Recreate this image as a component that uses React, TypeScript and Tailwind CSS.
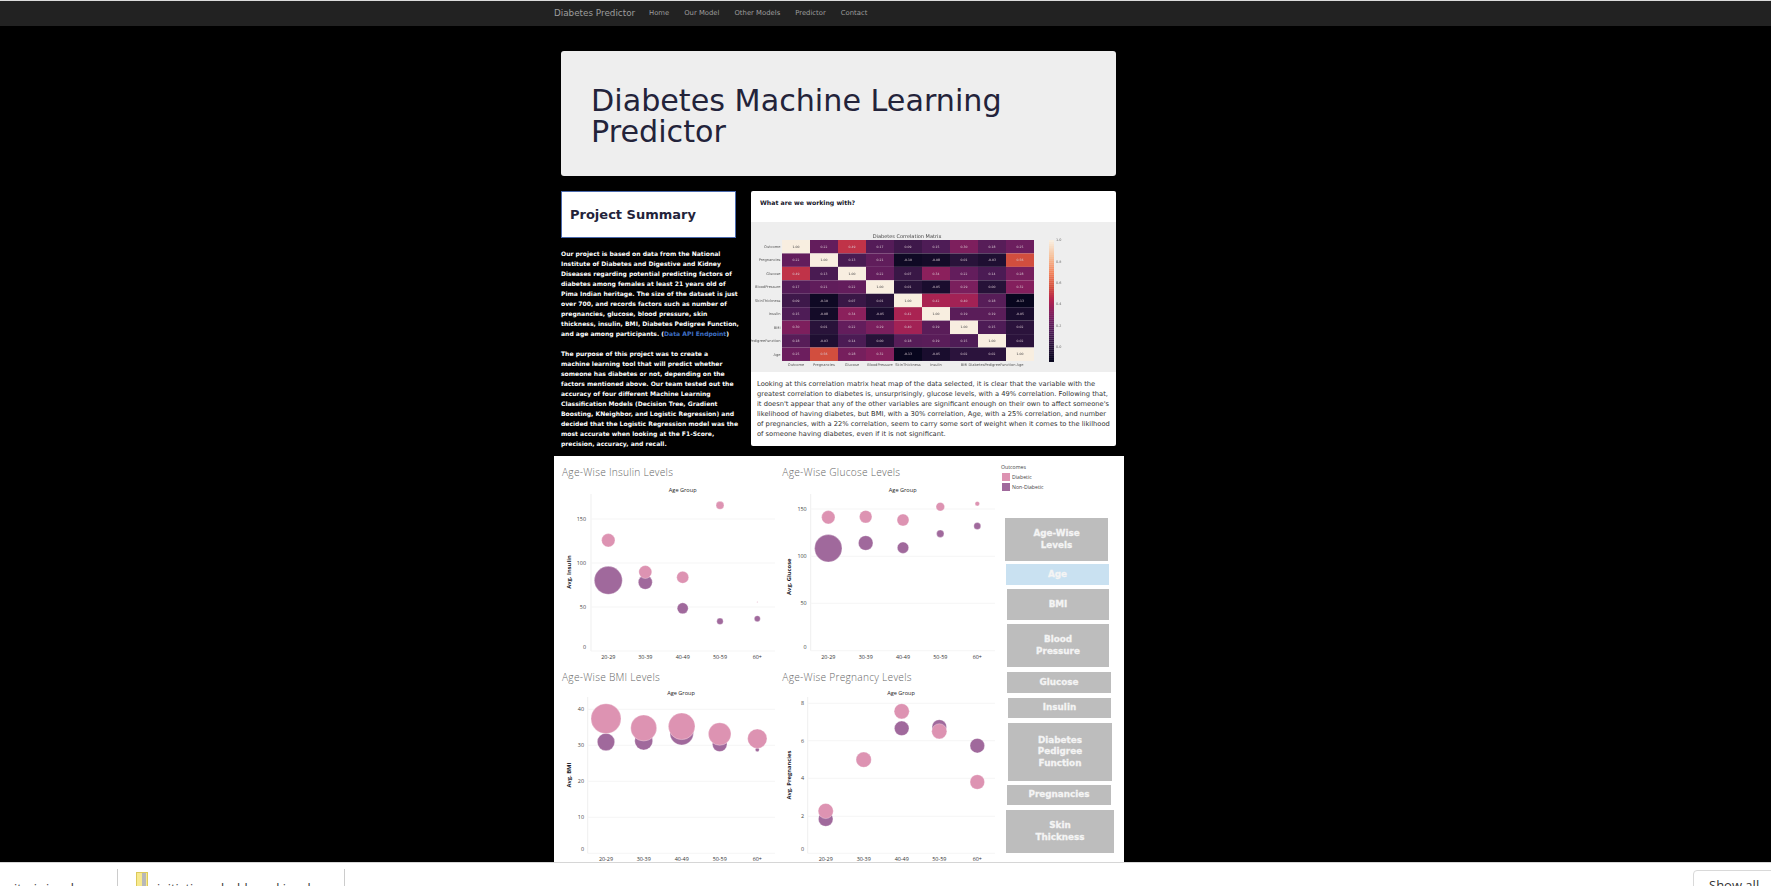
import React from "react";

const PINK = "#dd93b2";
const PURPLE = "#a0699c";
const AGE = ["20-29", "30-39", "40-49", "50-59", "60+"];
type Dot = [number, number];

function Chart(p: {
  box: [number, number, number, number];
  title: string;
  titleY: number;
  titleX: number;
  headX: number;
  headY: number;
  yTitle: string;
  yTitleX: number;
  yTitleC: number;
  left: number;
  right: number;
  top: number;
  bottom: number;
  grid: [number, string][];
  tickX: number;
  cols: number[];
  purple: Dot[];
  pink: Dot[];
}) {
  const [x, y, w, h] = p.box;
  return (
    <svg width={w} height={h} viewBox={`${x} ${y} ${w} ${h}`} className="block" style={{ fontFamily: '"Open Sans", sans-serif' }}>
      <text x={p.titleX} y={p.titleY} fontSize="10.2" fontWeight="300" fill="#666" letterSpacing="0.25">{p.title}</text>
      <text x={p.headX} y={p.headY} fontSize="5.6" fontWeight="500" fill="#222" textAnchor="middle">Age Group</text>
      <text x={p.yTitleX} y={p.yTitleC} fontSize="5.8" fontWeight="700" fill="#1a1a2a" textAnchor="middle" transform={`rotate(-90 ${p.yTitleX} ${p.yTitleC})`}>{p.yTitle}</text>
      <line x1={p.left} x2={p.left} y1={p.top} y2={p.bottom} stroke="#efefef" strokeWidth="1" />
      {p.grid.map(([gy, label]) => (
        <g key={label}>
          <line x1={p.left} x2={p.right} y1={gy} y2={gy} stroke="#f5f5f5" strokeWidth="1" />
          <text x={p.tickX} y={label === "0" ? gy - 2 : gy + 2} fontSize="5.4" fontWeight="500" fill="#444" textAnchor="end">{label}</text>
        </g>
      ))}
      {p.cols.map((cx, i) => (
        <text key={i} x={cx} y={p.bottom + 8} fontSize="5.4" fontWeight="500" fill="#333" textAnchor="middle">{AGE[i]}</text>
      ))}
      {p.purple.map(([cy, r], i) => (
        <circle key={i} cx={p.cols[i]} cy={cy} r={r} fill={PURPLE} stroke="#fff" strokeOpacity="0.5" strokeWidth="0.6" />
      ))}
      {p.pink.map(([cy, r], i) => (
        <circle key={i} cx={p.cols[i]} cy={cy} r={r} fill={PINK} stroke="#fff" strokeOpacity="0.5" strokeWidth="0.6" />
      ))}
    </svg>
  );
}

const LABELS = ["Outcome", "Pregnancies", "Glucose", "BloodPressure", "SkinThickness", "Insulin", "BMI", "DiabetesPedigreeFunction", "Age"];
const MATRIX = [
  [1, 0.22, 0.49, 0.17, 0.09, 0.15, 0.3, 0.18, 0.25],
  [0.22, 1, 0.13, 0.21, -0.1, -0.08, 0.01, -0.03, 0.56],
  [0.49, 0.13, 1, 0.22, 0.07, 0.34, 0.22, 0.14, 0.28],
  [0.17, 0.21, 0.22, 1, 0.01, -0.05, 0.29, -0.0, 0.32],
  [0.09, -0.1, 0.07, 0.01, 1, 0.42, 0.4, 0.18, -0.13],
  [0.15, -0.08, 0.34, -0.05, 0.42, 1, 0.19, 0.19, -0.05],
  [0.3, 0.01, 0.22, 0.29, 0.4, 0.19, 1, 0.15, 0.02],
  [0.18, -0.03, 0.14, -0.0, 0.18, 0.19, 0.15, 1, 0.02],
  [0.25, 0.56, 0.28, 0.32, -0.13, -0.05, 0.02, 0.02, 1],
];
const STOPS: [number, [number, number, number]][] = [
  [-0.13, [8, 6, 30]],
  [0, [38, 18, 56]],
  [0.15, [78, 28, 86]],
  [0.25, [108, 30, 94]],
  [0.35, [142, 32, 92]],
  [0.45, [182, 36, 78]],
  [0.56, [210, 78, 62]],
  [0.7, [243, 130, 90]],
  [0.85, [247, 190, 150]],
  [1, [248, 238, 224]],
];
function color(v: number) {
  for (let i = 1; i < STOPS.length; i++) {
    if (v <= STOPS[i][0]) {
      const [a, ca] = STOPS[i - 1];
      const [b, cb] = STOPS[i];
      const t = (v - a) / (b - a);
      const c = ca.map((q, k) => Math.round(q + (cb[k] - q) * t));
      return `rgb(${c[0]},${c[1]},${c[2]})`;
    }
  }
  return "rgb(248,238,224)";
}

function Heatmap() {
  const x0 = 782;
  const y0 = 240;
  const cw = 28;
  const ch = 13.44;
  const bar = Array.from({ length: 60 }, (_, i) => i);
  return (
    <svg width={365} height={150} viewBox="751 222 365 150" className="block blur-[0.6px]" style={{ fontFamily: '"DejaVu Sans", sans-serif' }}>
      <text x={907} y={238} fontSize="5" fill="#444" textAnchor="middle">Diabetes Correlation Matrix</text>
      {MATRIX.map((row, r) =>
        row.map((v, c) => (
          <g key={`${r}-${c}`}>
            <rect x={x0 + c * cw} y={y0 + r * ch} width={cw} height={ch} fill={color(v)} />
            <text x={x0 + c * cw + cw / 2} y={y0 + r * ch + ch / 2 + 1.1} fontSize="3.1" textAnchor="middle" fill={v > 0.6 ? "#444" : "#d8c8d0"}>{v.toFixed(2)}</text>
          </g>
        )),
      )}
      {LABELS.map((l, i) => (
        <g key={l}>
          <text x={780.5} y={y0 + i * ch + ch / 2 + 1.3} fontSize="3.6" fill="#555" textAnchor="end">{l}</text>
          <text x={x0 + i * cw + cw / 2} y={366} fontSize="3.6" fill="#555" textAnchor="middle">{l}</text>
        </g>
      ))}
      {bar.map((i) => (
        <rect key={i} x={1049} y={240 + i * 2.03} width={5} height={2.2} fill={color(1 - (i / 59) * 1.13)} />
      ))}
      {[["1.0", 241], ["0.8", 262.5], ["0.6", 284], ["0.4", 305], ["0.2", 326.5], ["0.0", 348]].map(([t, y]) => (
        <text key={t} x={1056} y={y} fontSize="3.4" fill="#666">{t}</text>
      ))}
    </svg>
  );
}

const BUTTONS = [
  { lines: ["Age-Wise", "Levels"], cls: "ml-[10px] w-[103px] h-[43px] mt-[27px] bg-[#bdbdbd]" },
  { lines: ["Age"], cls: "ml-[11px] w-[103px] h-[21px] mt-[3px] bg-[#c9e1f1]" },
  { lines: ["BMI"], cls: "ml-[12px] w-[102px] h-[31px] mt-[4px] bg-[#bdbdbd]" },
  { lines: ["Blood", "Pressure"], cls: "ml-[12px] w-[102px] h-[43px] mt-[4px] bg-[#bdbdbd]" },
  { lines: ["Glucose"], cls: "ml-[12px] w-[104px] h-[21px] mt-[5px] bg-[#bdbdbd]" },
  { lines: ["Insulin"], cls: "ml-[13px] w-[103px] h-[20px] mt-[5px] bg-[#bdbdbd]" },
  { lines: ["Diabetes", "Pedigree", "Function"], cls: "ml-[13px] w-[104px] h-[58px] mt-[5px] bg-[#bdbdbd]" },
  { lines: ["Pregnancies"], cls: "ml-[12px] w-[104px] h-[20px] mt-[4px] bg-[#bdbdbd]" },
  { lines: ["Skin", "Thickness"], cls: "ml-[11px] w-[108px] h-[43px] mt-[5px] bg-[#bdbdbd]" },
];

const DEJAVU = { fontFamily: '"DejaVu Sans", sans-serif' };

function Caret() {
  return (
    <svg width="8" height="6" viewBox="0 0 8 6" className="mt-[6px] shrink-0">
      <path d="M1 5 L4 2 L7 5" fill="none" stroke="#777" strokeWidth="1.4" />
    </svg>
  );
}

export default function App() {
  return (
    <div className="flex h-[886px] w-full flex-col overflow-hidden bg-black" style={DEJAVU}>
      <div className="h-px shrink-0 bg-[#dcdcdc]" />
      <nav className="flex h-[25px] shrink-0 items-center bg-[#222222] pl-[554px] text-[#9d9d9d]">
        <span className="mr-[15px] w-[80px] whitespace-nowrap text-[8.8px]">Diabetes Predictor</span>
        <div className="flex gap-[15px] text-[6.85px]">
          <span>Home</span>
          <span>Our Model</span>
          <span>Other Models</span>
          <span>Predictor</span>
          <span>Contact</span>
        </div>
      </nav>

      <main className="min-h-0 flex-1 overflow-hidden">
        <section className="ml-[561px] mt-[25px] h-[125px] w-[555px] rounded-[3px] bg-[#eeeeee] pl-[30px] pt-[34px]">
          <h1 className="w-[440px] text-[30.2px] font-normal leading-[31px] text-[#23233a]">Diabetes Machine Learning Predictor</h1>
        </section>

        <div className="ml-[561px] mt-[15px] flex h-[255px] gap-[15px]">
          <div className="w-[175px]">
            <div className="flex h-[47px] items-center border border-[#4a69ad] bg-white pl-[8px]">
              <h2 className="text-[13px] font-bold text-[#23233a]">Project Summary</h2>
            </div>
            <div className="mt-[11px] whitespace-nowrap text-[6.05px] font-bold leading-[10px] text-white">
              <p>Our project is based on data from the National</p>
              <p>Institute of Diabetes and Digestive and Kidney</p>
              <p>Diseases regarding potential predicting factors of</p>
              <p>diabetes among females at least 21 years old of</p>
              <p>Pima Indian heritage. The size of the dataset is just</p>
              <p>over 700, and records factors such as number of</p>
              <p>pregnancies, glucose, blood pressure, skin</p>
              <p>thickness, insulin, BMI, Diabetes Pedigree Function,</p>
              <p>and age among participants. (<span className="text-[#3f6fc4]">Data API Endpoint</span>)</p>
              <p className="mt-[10px]">The purpose of this project was to create a</p>
              <p>machine learning tool that will predict whether</p>
              <p>someone has diabetes or not, depending on the</p>
              <p>factors mentioned above. Our team tested out the</p>
              <p>accuracy of four different Machine Learning</p>
              <p>Classification Models (Decision Tree, Gradient</p>
              <p>Boosting, KNeighbor, and Logistic Regression) and</p>
              <p>decided that the Logistic Regression model was the</p>
              <p>most accurate when looking at the F1-Score,</p>
              <p>precision, accuracy, and recall.</p>
            </div>
          </div>
          <div className="w-[365px] rounded-[2px] bg-white">
            <div className="h-[31px] pl-[9px] pt-[7px] text-[6.2px] font-bold text-[#15152a]">What are we working with?</div>
            <div className="h-[150px] bg-[#eeeeee]"><Heatmap /></div>
            <div className="whitespace-nowrap pl-[6px] pt-[7px] text-[6.72px] leading-[10px] text-[#333333]">
              <p>Looking at this correlation matrix heat map of the data selected, it is clear that the variable with the</p>
              <p>greatest correlation to diabetes is, unsurprisingly, glucose levels, with a 49% correlation. Following that,</p>
              <p>it doesn't appear that any of the other variables are significant enough on their own to affect someone's</p>
              <p>likelihood of having diabetes, but BMI, with a 30% correlation, Age, with a 25% correlation, and number</p>
              <p>of pregnancies, with a 22% correlation, seem to carry some sort of weight when it comes to the likilhood</p>
              <p>of someone having diabetes, even if it is not significant.</p>
            </div>
          </div>
        </div>

        <section className="ml-[554px] mt-[10px] grid h-[406px] w-[570px] grid-cols-[221px_220px_129px] overflow-hidden bg-white">
          <div className="col-span-2 grid grid-cols-[221px_220px] grid-rows-[209px_197px]">
            <Chart box={[554, 456, 221, 209]} title="Age-Wise Insulin Levels" titleX={562} titleY={476} headX={682.7} headY={491.5} yTitle="Avg. Insulin" yTitleX={571} yTitleC={572} left={591} right={775} top={494} bottom={651} tickX={586} grid={[[519, "150"], [563, "100"], [607, "50"], [651, "0"]]} cols={[608.3, 645.3, 682.7, 720, 757.3]}
              purple={[[580.3, 14], [582.3, 7], [608.3, 5.5], [621.3, 3.2], [618.7, 3]]}
              pink={[[540.3, 6.7], [572, 6.5], [577.3, 6], [505.3, 4], [602, 0.5]]} />
            <Chart box={[775, 456, 220, 209]} title="Age-Wise Glucose Levels" titleX={782.3} titleY={476} headX={902.7} headY={491.5} yTitle="Avg. Glucose" yTitleX={791} yTitleC={576.7} left={810.7} right={995} top={494} bottom={650.7} tickX={806.7} grid={[[509, "150"], [556.3, "100"], [603.3, "50"], [650.7, "0"]]} cols={[828.3, 865.7, 903, 940.3, 977.3]}
              purple={[[548.3, 13.7], [543, 7.3], [547.7, 5.7], [533.7, 3.7], [526, 3.5]]}
              pink={[[517.3, 6.7], [516.7, 6.3], [520, 6], [506.7, 4.3], [503.7, 2.3]]} />
            <Chart box={[554, 665, 221, 197]} title="Age-Wise BMI Levels" titleX={562} titleY={680.5} headX={681} headY={695} yTitle="Avg. BMI" yTitleX={571} yTitleC={775} left={587.7} right={775} top={697} bottom={853.3} tickX={584} grid={[[709.3, "40"], [745.3, "30"], [781.3, "20"], [817.3, "10"], [853.3, "0"]]} cols={[606, 643.7, 681.7, 719.7, 757.3]}
              purple={[[742, 8.7], [741, 9], [733.3, 11.7], [744.3, 7.3], [749.7, 2]]}
              pink={[[718.7, 15], [728, 13], [726.3, 13.3], [734, 11.3], [738.7, 9.7]]} />
            <Chart box={[775, 665, 220, 197]} title="Age-Wise Pregnancy Levels" titleX={782.3} titleY={680.5} headX={901} headY={695} yTitle="Avg. Pregnancies" yTitleX={791} yTitleC={775} left={807.7} right={995} top={697} bottom={853.3} tickX={804} grid={[[703.3, "8"], [740.7, "6"], [778.3, "4"], [816.3, "2"], [853.3, "0"]]} cols={[825.7, 863.7, 901.7, 939.3, 977.3]}
              purple={[[819, 7.3], [759.7, 7.3], [728.3, 7.3], [727, 7.3], [745.7, 7.3]]}
              pink={[[811, 7.6], [759.7, 7.6], [711.3, 7.6], [731.3, 7.6], [782, 7.3]]} />
          </div>
          <div className="text-[#444]">
            <div className="ml-[6px] pt-[8px] text-[5.2px] leading-[6px]" style={{ fontFamily: '"Open Sans", sans-serif' }}>
              <div>Outcomes</div>
              <div className="mt-[3px] flex items-center gap-[2px]"><span className="ml-px h-[8px] w-[8px] bg-[#dd93b2]" />Diabetic</div>
              <div className="mt-[2px] flex items-center gap-[2px]"><span className="ml-px h-[8px] w-[8px] bg-[#a0699c]" />Non-Diabetic</div>
            </div>
            {BUTTONS.map((b) => (
              <div key={b.lines[0]} className={`flex flex-col items-center justify-center text-center text-[8.8px] font-bold leading-[11.5px] text-[#f4f4f4] [-webkit-text-stroke:0.3px_#f4f4f4] ${b.cls}`}>
                {b.lines.map((l) => <span key={l}>{l}</span>)}
              </div>
            ))}
          </div>
        </section>
      </main>

      <footer className="flex h-[24px] shrink-0 border-t border-[#d6d6d6] bg-white text-[12.5px] text-[#333]" style={{ fontFamily: '"Open Sans", sans-serif' }}>
        <div className="mt-[6px] flex h-[18px] w-[118px] items-start overflow-hidden whitespace-nowrap border-r border-[#cccccc] pl-[14px] pr-[19px] pt-[11px]">
          <span className="w-[77px] overflow-hidden">itsviz.ipynb</span>
          <Caret />
        </div>
        <div className="mt-[6px] flex h-[18px] w-[227px] items-start overflow-hidden whitespace-nowrap border-r border-[#cccccc] pl-[18px]">
          <svg width="12" height="18" viewBox="0 0 12 18" className="mt-[3px] shrink-0">
            <rect x="0.5" y="0.5" width="11" height="17" fill="#f7e98e" stroke="#dcc95a" />
            <rect x="6" y="1" width="4" height="16" fill="#b8b8b8" />
          </svg>
          <span className="ml-[9px] w-[164px] overflow-hidden pt-[11px]">initiatives-dashboard.ipynb</span>
          <span className="pt-[11px]"><Caret /></span>
        </div>
        <div className="ml-auto mr-[-10px] mt-[7px] h-[30px] w-[88px] rounded-[4px] border border-[#d9d9d9] pl-[15px] pt-[5px] text-[13px]">Show all</div>
      </footer>
    </div>
  );
}
